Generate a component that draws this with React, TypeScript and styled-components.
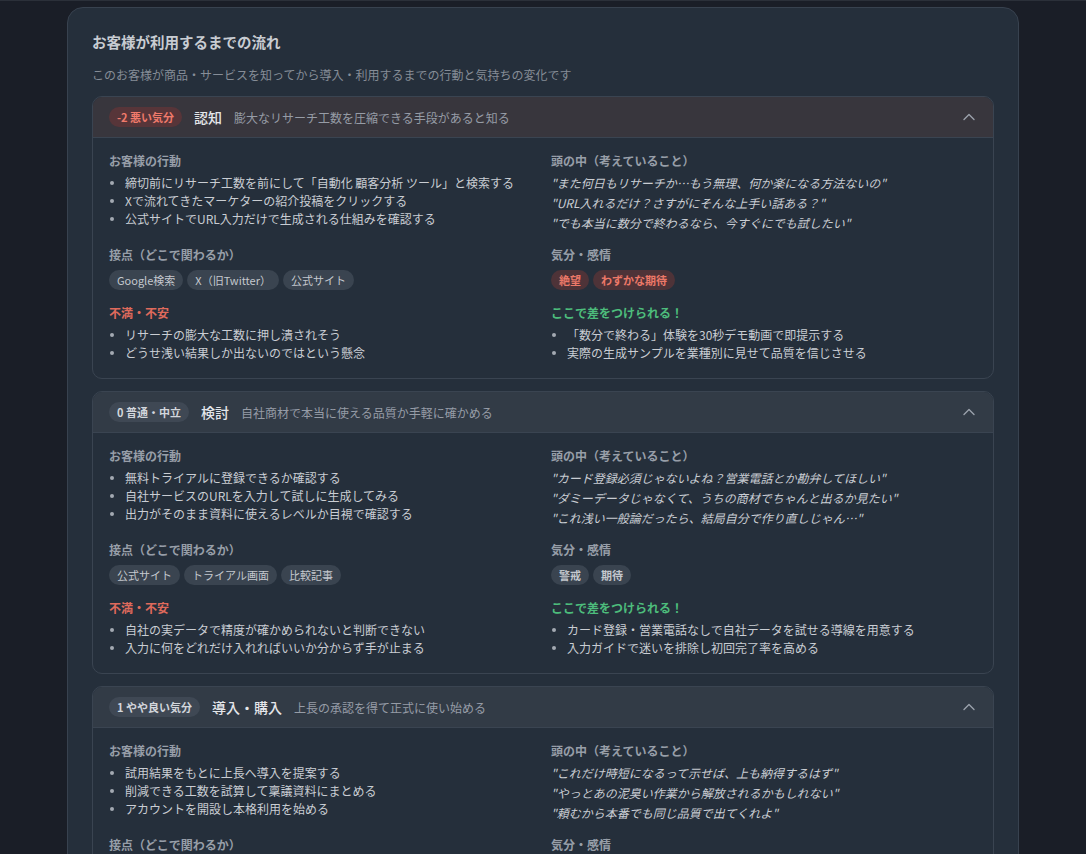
import React from 'react';
import styled, {createGlobalStyle, css} from 'styled-components';

type Tone = 'bad' | 'neutral' | 'good';

interface Emotion {
    label: string;
    tone: Tone;
}

interface Stage {
    score: string;
    mood: string;
    tone: Tone;
    title: string;
    desc: string;
    actions: string[];
    thoughts: string[];
    touchpoints: string[];
    emotions: Emotion[];
    pains: string[];
    chances: string[];
}

const stages: Stage[] = [
    {
        score: '-2',
        mood: '悪い気分',
        tone: 'bad',
        title: '認知',
        desc: '膨大なリサーチ工数を圧縮できる手段があると知る',
        actions: [
            '締切前にリサーチ工数を前にして「自動化 顧客分析 ツール」と検索する',
            'Xで流れてきたマーケターの紹介投稿をクリックする',
            '公式サイトでURL入力だけで生成される仕組みを確認する',
        ],
        thoughts: [
            '"また何日もリサーチか…もう無理、何か楽になる方法ないの"',
            '"URL入れるだけ？さすがにそんな上手い話ある？"',
            '"でも本当に数分で終わるなら、今すぐにでも試したい"',
        ],
        touchpoints: ['Google検索', 'X（旧Twitter）', '公式サイト'],
        emotions: [
            {label: '絶望', tone: 'bad'},
            {label: 'わずかな期待', tone: 'bad'},
        ],
        pains: ['リサーチの膨大な工数に押し潰されそう', 'どうせ浅い結果しか出ないのではという懸念'],
        chances: ['「数分で終わる」体験を30秒デモ動画で即提示する', '実際の生成サンプルを業種別に見せて品質を信じさせる'],
    },
    {
        score: '0',
        mood: '普通・中立',
        tone: 'neutral',
        title: '検討',
        desc: '自社商材で本当に使える品質か手軽に確かめる',
        actions: [
            '無料トライアルに登録できるか確認する',
            '自社サービスのURLを入力して試しに生成してみる',
            '出力がそのまま資料に使えるレベルか目視で確認する',
        ],
        thoughts: [
            '"カード登録必須じゃないよね？営業電話とか勘弁してほしい"',
            '"ダミーデータじゃなくて、うちの商材でちゃんと出るか見たい"',
            '"これ浅い一般論だったら、結局自分で作り直しじゃん…"',
        ],
        touchpoints: ['公式サイト', 'トライアル画面', '比較記事'],
        emotions: [
            {label: '警戒', tone: 'neutral'},
            {label: '期待', tone: 'neutral'},
        ],
        pains: ['自社の実データで精度が確かめられないと判断できない', '入力に何をどれだけ入れればいいか分からず手が止まる'],
        chances: ['カード登録・営業電話なしで自社データを試せる導線を用意する', '入力ガイドで迷いを排除し初回完了率を高める'],
    },
    {
        score: '1',
        mood: 'やや良い気分',
        tone: 'neutral',
        title: '導入・購入',
        desc: '上長の承認を得て正式に使い始める',
        actions: [
            '試用結果をもとに上長へ導入を提案する',
            '削減できる工数を試算して稟議資料にまとめる',
            'アカウントを開設し本格利用を始める',
        ],
        thoughts: [
            '"これだけ時短になるって示せば、上も納得するはず"',
            '"やっとあの泥臭い作業から解放されるかもしれない"',
            '"頼むから本番でも同じ品質で出てくれよ"',
        ],
        touchpoints: ['料金ページ', '社内稟議', '管理画面'],
        emotions: [
            {label: '安堵', tone: 'good'},
            {label: '期待', tone: 'good'},
        ],
        pains: ['費用対効果を社内にうまく説明できるか不安', '本番運用で品質がぶれないか心配'],
        chances: ['稟議にそのまま使える効果試算テンプレートを提供する', '導入初週のサポートで最初の成功体験を確実にする'],
    },
];

const GlobalStyle = createGlobalStyle`
    html, body {
        margin: 0;
        padding: 0;
        background: #1a1e27;
    }
    body {
        border-top: 1px solid #2b3039;
        font-family: "Noto Sans CJK JP", "Noto Sans", sans-serif;
        color: #c9cdd3;
    }
`;

const Page = styled.div`
    min-height: 100vh;
    padding-top: 6px;
    box-sizing: border-box;
`;

const Panel = styled.section`
    width: 952px;
    margin: 0 auto;
    box-sizing: border-box;
    padding: 24px;
    background: #252f3b;
    border: 1px solid #38424f;
    border-radius: 16px;
`;

const Title = styled.h2`
    margin: 0 0 14px;
    font-size: 14.5px;
    line-height: 20px;
    font-weight: 700;
    color: #c8ccd2;
`;

const Lead = styled.p`
    margin: 0 0 12px;
    font-size: 12px;
    line-height: 18px;
    color: #868d97;
`;

const Stack = styled.div`
    display: flex;
    flex-direction: column;
    gap: 12px;
`;

const Card = styled.article`
    border: 1px solid #3a4451;
    border-radius: 10px;
    overflow: hidden;
`;

const CardHead = styled.header<{$tone: Tone}>`
    display: flex;
    align-items: center;
    gap: 12px;
    height: 40px;
    padding: 0 18px 0 16px;
    background: ${p => (p.$tone === 'bad' ? '#38363d' : '#323b46')};
    border-bottom: 1px solid #3a4451;
`;

const MoodBadge = styled.span<{$tone: Tone}>`
    height: 20px;
    line-height: 20px;
    padding: 0 8px;
    border-radius: 999px;
    font-size: 11px;
    font-weight: 700;
    white-space: nowrap;
    ${p => p.$tone === 'bad'
        ? css`background: #573539; color: #ef7a6b;`
        : css`background: #3f4854; color: #d2d6dc;`}
`;

const StageName = styled.span`
    font-size: 14px;
    font-weight: 500;
    color: #e4e6ea;
    white-space: nowrap;
`;

const StageDesc = styled.span`
    flex: 1;
    font-size: 12px;
    color: #969ca6;
`;

const Chevron = styled.svg`
    flex-shrink: 0;
    color: #9aa1ab;
`;

const CardBody = styled.div`
    display: grid;
    grid-template-columns: 1fr 1fr;
    column-gap: 16px;
    row-gap: 15px;
    padding: 15px 16px 16px;
`;

const Section = styled.div`
    display: flex;
    flex-direction: column;
    gap: 5px;
`;

const Label = styled.h4<{$accent?: 'red' | 'green'}>`
    margin: 0;
    font-size: 12px;
    line-height: 16px;
    font-weight: 700;
    color: ${p => (p.$accent === 'red' ? '#df6a5c' : p.$accent === 'green' ? '#4dbd7c' : '#979ea8')};
`;

const List = styled.ul`
    margin: 0;
    padding: 0;
    list-style: none;
`;

const Item = styled.li`
    display: flex;
    font-size: 12px;
    line-height: 18px;
    color: #c9cdd3;
    &::before {
        content: '';
        flex-shrink: 0;
        width: 4px;
        height: 4px;
        margin: 7px 11px 0 1px;
        border-radius: 50%;
        background: #a3a9b2;
    }
`;

const Quotes = styled.div`
    display: flex;
    flex-direction: column;
    gap: 2px;
`;

const Quote = styled.p`
    margin: 0;
    font-size: 12px;
    line-height: 18px;
    font-style: italic;
    color: #c9cdd3;
`;

const Tags = styled.div`
    display: flex;
    flex-wrap: wrap;
    gap: 4px;
    margin-top: 2px;
`;

const Tag = styled.span<{$tone?: Tone; $strong?: boolean}>`
    height: 20px;
    line-height: 20px;
    padding: 0 8px;
    border-radius: 999px;
    font-size: 11px;
    font-weight: ${p => (p.$strong ? 700 : 400)};
    ${p => {
        if (p.$tone === 'bad') return css`background: #4e3338; color: #ec7868;`;
        if (p.$tone === 'good') return css`background: #27433a; color: #5ccb8a;`;
        return css`background: #3a4450; color: ${p.$strong ? '#c3c7cd' : '#c4c8ce'};`;
    }}
`;

const ChevronUp = () => (
    <Chevron width="12" height="12" viewBox="0 0 12 12" fill="none">
        <polyline points="1,8.5 6,3.5 11,8.5" stroke="currentColor" strokeWidth="1.4" strokeLinecap="round" strokeLinejoin="round" />
    </Chevron>
);

const StageCard = ({stage}: {stage: Stage}) => (
    <Card>
        <CardHead $tone={stage.tone}>
            <MoodBadge $tone={stage.tone}>{stage.score} {stage.mood}</MoodBadge>
            <StageName>{stage.title}</StageName>
            <StageDesc>{stage.desc}</StageDesc>
            <ChevronUp />
        </CardHead>
        <CardBody>
            <Section>
                <Label>お客様の行動</Label>
                <List>
                    {stage.actions.map(a => <Item key={a}>{a}</Item>)}
                </List>
            </Section>
            <Section>
                <Label>頭の中（考えていること）</Label>
                <Quotes>
                    {stage.thoughts.map(t => <Quote key={t}>{t}</Quote>)}
                </Quotes>
            </Section>
            <Section>
                <Label>接点（どこで関わるか）</Label>
                <Tags>
                    {stage.touchpoints.map(t => <Tag key={t}>{t}</Tag>)}
                </Tags>
            </Section>
            <Section>
                <Label>気分・感情</Label>
                <Tags>
                    {stage.emotions.map(e => <Tag key={e.label} $tone={e.tone} $strong>{e.label}</Tag>)}
                </Tags>
            </Section>
            <Section>
                <Label $accent="red">不満・不安</Label>
                <List>
                    {stage.pains.map(p => <Item key={p}>{p}</Item>)}
                </List>
            </Section>
            <Section>
                <Label $accent="green">ここで差をつけられる！</Label>
                <List>
                    {stage.chances.map(c => <Item key={c}>{c}</Item>)}
                </List>
            </Section>
        </CardBody>
    </Card>
);

const App: React.FC = () => {
    return (
        <Page>
            <GlobalStyle />
            <Panel>
                <Title>お客様が利用するまでの流れ</Title>
                <Lead>このお客様が商品・サービスを知ってから導入・利用するまでの行動と気持ちの変化です</Lead>
                <Stack>
                    {stages.map(s => <StageCard key={s.title} stage={s} />)}
                </Stack>
            </Panel>
        </Page>
    );
};

export default App;
